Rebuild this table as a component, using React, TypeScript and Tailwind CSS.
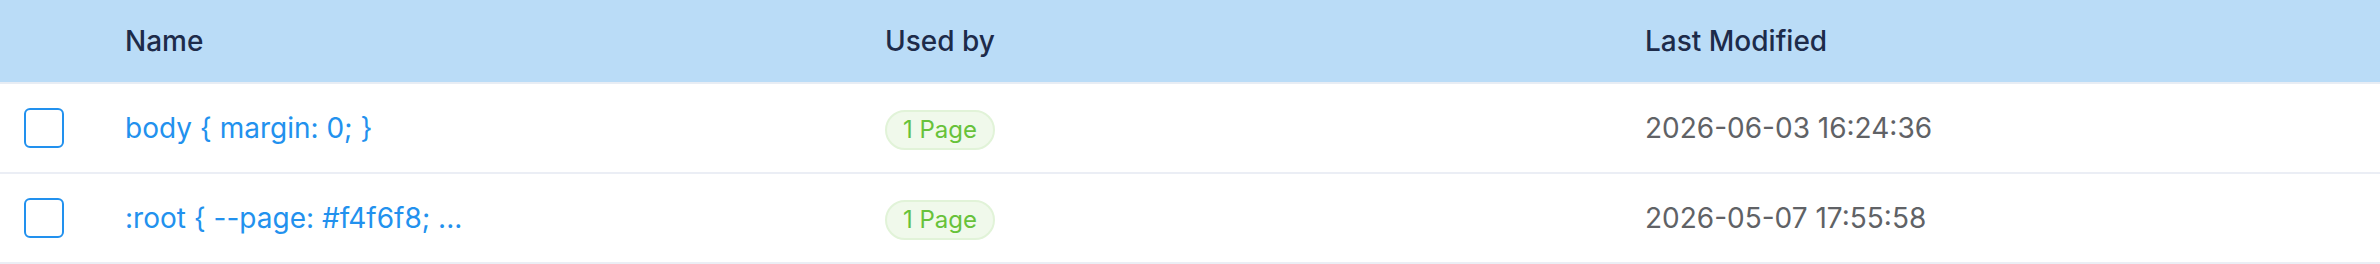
import React from 'react'

const rows = [
  { name: 'body { margin: 0; }', usedBy: '1 Page', modified: '2026-06-03 16:24:36' },
  { name: ':root { --page: #f4f6f8; ...', usedBy: '1 Page', modified: '2026-05-07 17:55:58' },
]

export default function App() {
  return (
    <div className="w-[2380px] bg-white font-['Inter','Liberation_Sans',sans-serif] text-[28px]">
      <div className="grid grid-cols-[101px_760px_760px_1fr] h-[84px] items-center bg-[#badcf7] border-b-2 border-[#e8edf4]">
        <div />
        <div className="px-6 text-[#1d2b4a] font-medium">Name</div>
        <div className="px-6 text-[#1d2b4a] font-medium">Used by</div>
        <div className="px-6 text-[#1d2b4a] font-medium">Last Modified</div>
      </div>
      {rows.map((r) => (
        <div key={r.name} className="grid grid-cols-[101px_760px_760px_1fr] h-[90px] items-center border-b-2 border-[#ebeef5]">
          <div className="px-6 flex items-center">
            <span className="block w-10 h-10 rounded-[6px] border-2 border-[#2291ee] bg-white" />
          </div>
          <div className="px-6 text-[#2291ee] whitespace-nowrap">{r.name}</div>
          <div className="px-6">
            <span className="inline-flex items-center h-10 px-4 rounded-full bg-[#f0f9eb] border-2 border-[#e1f3d8] text-[#67c23a] text-[24px]">
              {r.usedBy}
            </span>
          </div>
          <div className="px-6 text-[#606266] whitespace-nowrap">{r.modified}</div>
        </div>
      ))}
    </div>
  )
}
